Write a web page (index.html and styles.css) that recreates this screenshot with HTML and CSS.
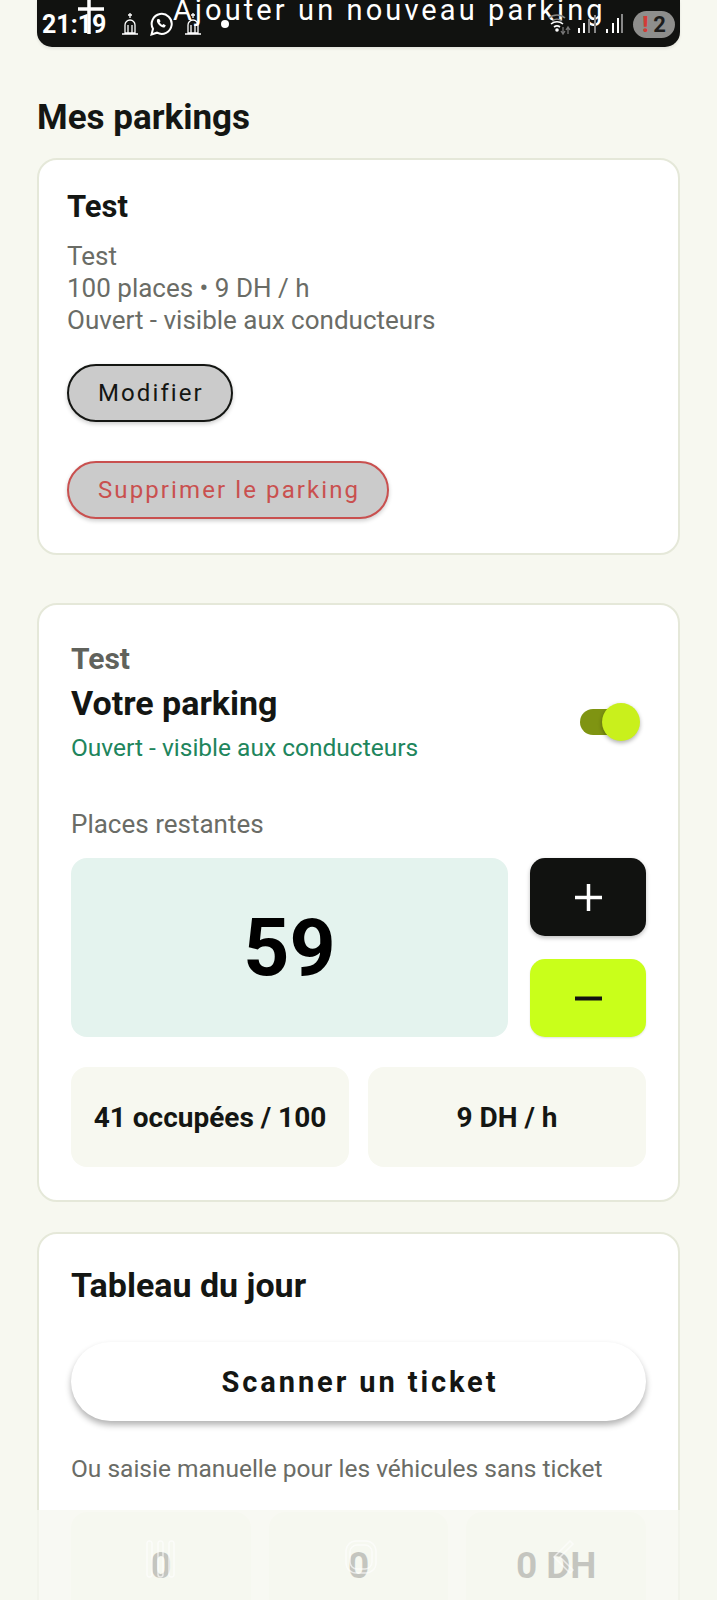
FILE: index.html
```html
<!DOCTYPE html>
<html lang="fr">
<head>
    <meta charset="UTF-8">
    <meta name="viewport" content="width=device-width, initial-scale=1.0">
    <title>Mes parkings</title>
    <link rel="stylesheet" href="styles.css">
</head>
<body>
    <div class="screen">
        <div class="content">
            <div class="add-bar">
                <svg class="add-plus" viewBox="0 0 28 34" width="28" height="34"><path d="M1 9h26M12 0v34" fill="none" stroke="#fff" stroke-width="3.500"/></svg>
                <span class="add-label">Ajouter un nouveau parking</span>
            </div>

            <h1 class="page-title">Mes parkings</h1>

            <div class="card card-list">
                <h2 class="list-name">Test</h2>
                <p class="list-info">Test<br>100 places • 9 DH / h<br>Ouvert - visible aux conducteurs</p>
                <button class="pill">Modifier</button>
                <button class="pill pill-danger">Supprimer le parking</button>
            </div>

            <div class="card card-manage">
                <div class="manage-head">
                    <div>
                        <div class="manage-name">Test</div>
                        <h2 class="card-title manage-title">Votre parking</h2>
                        <div class="manage-status">Ouvert - visible aux conducteurs</div>
                    </div>
                    <div class="switch"><span class="switch-knob"></span></div>
                </div>
                <div class="remaining-label">Places restantes</div>
                <div class="remaining-row">
                    <div class="remaining-count">59</div>
                    <div class="stepper">
                        <button class="step step-plus"><svg viewBox="0 0 27 27" width="27" height="27"><path d="M0 13.500h27M13.500 0v27" stroke="#fff" stroke-width="3.500"/></svg></button>
                        <button class="step step-minus"><svg viewBox="0 0 27 27" width="27" height="27"><path d="M0 13.500h27" stroke="#111210" stroke-width="4"/></svg></button>
                    </div>
                </div>
                <div class="info-row">
                    <div class="info-box">41 occupées / 100</div>
                    <div class="info-box">9 DH / h</div>
                </div>
            </div>

            <div class="card card-day">
                <h2 class="card-title">Tableau du jour</h2>
                <button class="scan">Scanner un ticket</button>
                <p class="manual-note">Ou saisie manuelle pour les véhicules sans ticket</p>
                <div class="stat-row">
                    <div class="stat"><div class="stat-value">0</div><div class="stat-label">Entrées</div></div>
                    <div class="stat"><div class="stat-value">0</div><div class="stat-label">Sorties</div></div>
                    <div class="stat"><div class="stat-value">0 DH</div><div class="stat-label">Recettes</div></div>
                </div>
            </div>
        </div>

        <!-- phone status bar, sits over the page -->
        <div class="status-bar">
            <span class="status-time">21:19</span>
            <svg viewBox="0 0 20 24" width="20" height="24"><path d="M10 1v5M8 3h4M5 13a5 5 0 0 1 10 0v8H5zM2 22h16M8 13v8M12 13v8" fill="none" stroke="#fff" stroke-width="1.300"/></svg>
            <svg viewBox="0 0 24 24" width="24" height="24"><path d="M2.500 22.500l1.500-5.700A10 10 0 1 1 8 20.700z" fill="none" stroke="#fff" stroke-width="2"/><path d="M8.500 7c-1.200 1.500-.7 3.800 1.500 6s4.500 3.200 6 2l.8-1.700-2.500-1.300-1 1c-1-.4-2.300-1.700-2.700-2.700l1-1L10.300 7z" fill="#fff"/></svg>
            <svg viewBox="0 0 20 24" width="20" height="24"><path d="M10 1v5M8 3h4M5 13a5 5 0 0 1 10 0v8H5zM2 22h16M8 13v8M12 13v8" fill="none" stroke="#fff" stroke-width="1.300"/></svg>
            <span class="status-dot"></span>
            <span class="status-spacer"></span>
            <svg viewBox="0 0 76 26" width="76" height="26">
                <path d="M1 7a12 12 0 0 1 16 0M4 10a8 8 0 0 1 10 0" fill="none" stroke="#8a8a88" stroke-width="1.600"/>
                <path d="M3 13a9 9 0 0 1 12 0M6 16a5 5 0 0 1 6 0" fill="none" stroke="#fff" stroke-width="1.600"/>
                <circle cx="9" cy="19" r="1.800" fill="#fff"/>
                <path d="M15 16v7M13 20l2 3 2-3M20 23v-7M18 19l2-3 2 3" fill="none" stroke="#777" stroke-width="1.300"/>
                <path d="M30 17h2v5h-2zM35 12h2v10h-2z" fill="#fff"/>
                <path d="M40 8h2v14h-2zM46 4h2v18h-2z" fill="#888"/>
                <path d="M58 18h2v4h-2zM64 12h2v10h-2zM69 7h2v15h-2z" fill="#fff"/>
                <path d="M73 3h2v19h-2z" fill="#888"/>
            </svg>
            <span class="status-badge"><b>!</b>2</span>
        </div>

        <!-- bottom nav, faded over the page -->
        <div class="bottom-nav">
            <svg viewBox="0 0 31 38" width="31" height="38"><rect x="2" y="1" width="5" height="36" rx="2.500" fill="none" stroke="#fff" stroke-width="1.500"/><rect x="13" y="1" width="5" height="36" rx="2.500" fill="none" stroke="#fff" stroke-width="1.500"/><rect x="24" y="1" width="5" height="36" rx="2.500" fill="none" stroke="#fff" stroke-width="1.500"/></svg>
            <svg viewBox="0 0 32 34" width="32" height="34"><rect x="1" y="1" width="30" height="32" rx="10" fill="none" stroke="#fff" stroke-width="1.500"/><rect x="5" y="5" width="22" height="24" rx="7" fill="none" stroke="#fff" stroke-width="1.500"/></svg>
            <svg class="nav-back" viewBox="0 0 22 34" width="22" height="34"><path d="M17 1L1 17l16 16 3-3L7 17 20 4z" fill="none" stroke="#fff" stroke-width="1.500"/></svg>
        </div>
    </div>
</body>
</html>
```

FILE: styles.css
```css
* {
    box-sizing: border-box;
}
body {
    margin: 0;
    font-family: Roboto, "Noto Sans", sans-serif;
    background: #f7f8f0;
    color: #141613;
}
button {
    font-family: inherit;
    display: block;
}
.screen {
    position: relative;
    width: 717px;
    height: 1600px;
    overflow: hidden;
    background: #f7f8f0;
}
.content {
    padding: 0 37px;
}
.add-bar {
    position: relative;
    height: 47px;
    background: #111210;
    border-radius: 0 0 15px 15px;
    color: #fff;
    overflow: hidden;
    box-shadow: 0 2px 3px rgba(0,0,0,0.08);
}
.add-plus {
    position: absolute;
    left: 40px;
    top: 0;
}
.add-label {
    display: block;
    margin-top: -6px;
    margin-left: 136px;
    font-size: 29px;
    line-height: 32px;
    letter-spacing: 3.100px;
    white-space: nowrap;
}
.page-title {
    margin: 52px 0 21px;
    font-size: 35px;
    line-height: 38px;
    font-weight: 700;
}
.card {
    background: #fff;
    border: 2px solid #e5e8d9;
    border-radius: 20px;
}
.card-list {
    height: 397px;
    padding: 30px 28px;
}
.list-name {
    margin: 0;
    font-size: 31px;
    line-height: 34px;
    font-weight: 700;
}
.list-info {
    margin: 16px 0 0;
    font-size: 26px;
    line-height: 32px;
    color: #6a6c66;
}
.pill {
    margin-top: 28px;
    height: 58px;
    padding: 0 27px 0 29px;
    background: #cbcbcb;
    border: 2px solid #141613;
    border-radius: 29px;
    font-size: 24px;
    letter-spacing: 2.100px;
    color: #141613;
    box-shadow: 0 2px 4px rgba(0,0,0,0.2);
}
.pill-danger {
    margin-top: 39px;
    border-color: #c9504f;
    color: #c9504f;
}
.card-manage {
    height: 599px;
    margin-top: 48px;
    padding: 37px 32px 0;
}
.manage-head {
    display: flex;
    justify-content: space-between;
    align-items: center;
}
.manage-name {
    font-size: 30px;
    line-height: 33px;
    font-weight: 700;
    color: #60625c;
}
.card-title {
    margin: 0;
    font-size: 34px;
    line-height: 42px;
    font-weight: 700;
}
.manage-title {
    margin-top: 7px;
}
.manage-status {
    margin-top: 9px;
    font-size: 24.500px;
    line-height: 30px;
    color: #20855c;
}
.switch {
    position: relative;
    width: 42px;
    height: 26px;
    margin: 38px 24px 0 0;
    background: #7f9412;
    border-radius: 13px;
}
.switch-knob {
    position: absolute;
    right: -18px;
    top: -6px;
    width: 38px;
    height: 38px;
    background: #c9f01c;
    border-radius: 50%;
    box-shadow: 0 2px 4px rgba(0,0,0,0.3);
}
.remaining-label {
    margin-top: 46px;
    font-size: 26px;
    line-height: 30px;
    color: #6a6c66;
}
.remaining-row {
    display: flex;
    gap: 22px;
    margin-top: 19px;
}
.remaining-count {
    flex: 1;
    height: 179px;
    display: flex;
    align-items: center;
    justify-content: center;
    background: #e4f3ee;
    border-radius: 16px;
    font-size: 80.500px;
    font-weight: 700;
    color: #000;
}
.stepper {
    width: 116px;
    display: flex;
    flex-direction: column;
    justify-content: space-between;
}
.step {
    height: 78px;
    padding: 0;
    border: none;
    border-radius: 15px;
    display: flex;
    align-items: center;
    justify-content: center;
}
.step-plus {
    background: #111210;
    box-shadow: 0 2px 4px rgba(0,0,0,0.25);
}
.step-minus {
    background: #c9ff1a;
    box-shadow: 0 1px 2px rgba(0,0,0,0.12);
}
.info-row {
    display: flex;
    gap: 19px;
    margin-top: 30px;
}
.info-box {
    flex: 1;
    height: 100px;
    display: flex;
    align-items: center;
    justify-content: center;
    background: #f7f8f0;
    border-radius: 16px;
    font-size: 28px;
    font-weight: 700;
}
.card-day {
    height: 500px;
    margin-top: 30px;
    padding: 30px 32px 0;
}
.scan {
    width: 100%;
    height: 79px;
    margin-top: 36px;
    padding: 0 0 0 3px;
    background: #fff;
    border: none;
    border-radius: 40px;
    font-size: 29px;
    font-weight: 700;
    letter-spacing: 2.900px;
    color: #141613;
    box-shadow: 0 4px 6px rgba(0,0,0,0.3);
}
.manual-note {
    margin: 33px 0 0;
    font-size: 24.500px;
    line-height: 30px;
    color: #6a6c66;
}
.stat-row {
    display: flex;
    gap: 18px;
    margin-top: 28px;
}
.stat {
    flex: 1;
    height: 130px;
    padding-top: 32px;
    background: #f7f8f0;
    border-radius: 16px;
    text-align: center;
}
.stat-value {
    font-size: 37px;
    line-height: 44px;
    font-weight: 700;
}
.stat-label {
    margin-top: 8px;
    font-size: 24px;
    color: #6a6c66;
}

/* overlays */
.status-bar {
    position: absolute;
    left: 42px;
    right: 42px;
    top: 8px;
    height: 32px;
    display: flex;
    align-items: center;
    gap: 9.500px;
    color: #fff;
}
.status-time {
    margin-right: 4px;
    font-size: 25px;
    font-weight: 700;
}
.status-dot {
    width: 8px;
    height: 8px;
    margin-left: 9px;
    background: #fff;
    border-radius: 50%;
}
.status-spacer {
    flex: 1;
}
.status-badge {
    width: 42px;
    height: 27px;
    background: #8e8e8c;
    border-radius: 14px;
    text-align: center;
    font-size: 22px;
    line-height: 27px;
    font-weight: 700;
    color: #1d1d1c;
}
.status-badge b {
    color: #d23c36;
    margin-right: 5px;
}
.bottom-nav {
    position: absolute;
    left: 0;
    right: 0;
    bottom: 0;
    height: 90px;
    padding: 30px 0 0 145px;
    display: flex;
    gap: 169px;
    align-items: flex-start;
    background: rgba(246,247,240,0.78);
}
.bottom-nav svg {
    opacity: 0.65;
}
.nav-back {
    margin-left: 7px;
}
```
